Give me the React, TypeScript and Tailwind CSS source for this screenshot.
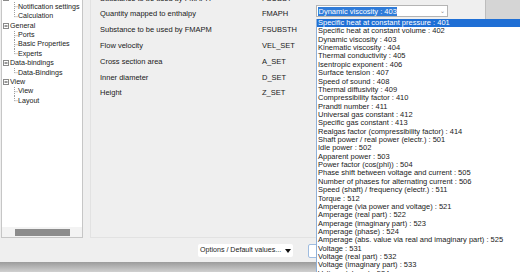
import React from 'react'

const font = { fontFamily: '"Liberation Sans", Arial, sans-serif' }

const tree = [
  { label: '', children: ['Notification settings', 'Calculation'] },
  { label: 'General', children: ['Ports', 'Basic Properties', 'Experts'] },
  { label: 'Data-bindings', children: ['Data-Bindings'] },
  { label: 'View', children: ['View', 'Layout'] },
]

const rows = [
  ['Substance to be used by FMAPH', 'FSUBST'],
  ['Quantity mapped to enthalpy', 'FMAPH'],
  ['Substance to be used by FMAPM', 'FSUBSTH'],
  ['Flow velocity', 'VEL_SET'],
  ['Cross section area', 'A_SET'],
  ['Inner diameter', 'D_SET'],
  ['Height', 'Z_SET'],
]

const options = [
  'Specific heat at constant pressure : 401',
  'Specific heat at constant volume : 402',
  'Dynamic viscosity : 403',
  'Kinematic viscosity : 404',
  'Thermal conductivity : 405',
  'Isentropic exponent : 406',
  'Surface tension : 407',
  'Speed of sound : 408',
  'Thermal diffusivity : 409',
  'Compressibility factor : 410',
  'Prandtl number : 411',
  'Universal gas constant : 412',
  'Specific gas constant : 413',
  'Realgas factor (compressibility factor) : 414',
  'Shaft power / real power (electr.) : 501',
  'Idle power : 502',
  'Apparent power : 503',
  'Power factor (cos(phi)) : 504',
  'Phase shift between voltage and current : 505',
  'Number of phases for alternating current : 506',
  'Speed (shaft) / frequency (electr.) : 511',
  'Torque : 512',
  'Amperage (via power and voltage) : 521',
  'Amperage (real part) : 522',
  'Amperage (imaginary part) : 523',
  'Amperage (phase) : 524',
  'Amperage (abs. value via real and imaginary part) : 525',
  'Voltage : 531',
  'Voltage (real part) : 532',
  'Voltage (imaginary part) : 533',
  'Voltage (phase) : 534',
]

function Connector({ last }: { last: boolean }) {
  return (
    <svg width="4" height="9.4" className="flex-none">
      <line x1="0.5" y1="0" x2="0.5" y2={last ? 4.7 : 9.4} stroke="#a0a0a0" strokeDasharray="1 1" />
      <line x1="0.5" y1="4.7" x2="3.5" y2="4.7" stroke="#a0a0a0" strokeDasharray="1 1" />
    </svg>
  )
}

function Expander() {
  return (
    <svg width="6" height="6" className="flex-none">
      <rect x="0.5" y="0.5" width="5" height="5" fill="#fff" stroke="#8a8a8a" />
      <line x1="1.5" y1="3" x2="4.5" y2="3" stroke="#333" />
    </svg>
  )
}

export default function App() {
  return (
    <div className="w-[520px] h-[272px] overflow-hidden relative flex flex-col bg-[#efefef] text-[7.5px] text-[#1a1a1a] whitespace-nowrap" style={font}>
      <div className="h-[238px] flex">
        {/* tree */}
        <div className="ml-[1px] w-[82px] flex-none bg-white border-l border-r border-b border-[#c6c6c6] flex flex-col overflow-hidden text-[7.1px]">
          <div className="flex-1 mt-[-7px] pl-[1px]">
            {tree.map((g, gi) => (
              <div key={gi}>
                <div className="h-[9.4px] flex items-center gap-[1px]">
                  <Expander />
                  <span>{g.label}</span>
                </div>
                <div className="pl-[11px]">
                  {g.children.map((c, ci) => (
                    <div key={ci} className="h-[9.4px] flex items-center">
                      <Connector last={ci === g.children.length - 1} />
                      <span>{c}</span>
                    </div>
                  ))}
                </div>
              </div>
            ))}
          </div>
          <div className="h-[10px] bg-[#f3f3f3] flex items-center pl-[13px]">
            <div className="w-[55px] h-[7px] bg-[#8c8c8c]" />
          </div>
        </div>

        {/* form */}
        <div className="ml-[7px] flex-1 flex border-l border-b border-[#e2e2e2]">
          <div className="flex-1 pl-[9px] mt-[-9.6px] flex flex-col">
            {rows.map(([label, code], i) => (
              <div key={i} className="h-[15.8px] flex items-center">
                <span className="w-[162px] flex-none">{label}</span>
                <span className="w-[54px] flex-none">{code}</span>
                {i === 1 && (
                  <div className="relative top-[-3px] w-[132px] flex-none h-[12px] bg-white border border-[#b4b4b4] flex items-center pl-[1px] pr-[2px]">
                    <span className="bg-[#2f7bd8] text-white px-[0.5px] leading-[9px]">Dynamic viscosity : 403</span>
                    <span className="ml-auto text-[#8a8a8a] text-[6px]">⌄</span>
                  </div>
                )}
              </div>
            ))}
          </div>
          <div className="w-[35px] flex-none bg-[#d5d5d5] border-l border-[#bdbdbd]" />
        </div>
      </div>

      {/* buttons */}
      <div className="h-[24px] flex items-start pt-[6px] pl-[198px] gap-[15px]">
        <div className="w-[95px] h-[13px] bg-white rounded-[2px] flex items-center pl-[2px] pr-[2px] text-[7.1px]">
          <span>Options / Default values...</span>
          <svg width="6" height="4" className="ml-auto flex-none">
            <polygon points="0,0 6,0 3,4" fill="#111" />
          </svg>
        </div>
        <div className="w-[60px] h-[14px] bg-white border border-[#9fbce0] rounded-[2px]" />
      </div>

      <div className="flex-1 bg-gradient-to-b from-[#9c9c9c] to-[#d0d0d0]" />

      {/* dropdown list */}
      <div className="absolute left-[316px] top-[19px] right-0 h-[270px] bg-white border-l border-[#8fb0d8] overflow-hidden">
        {options.map((o, i) => (
          <div key={i} className={`h-[8.36px] leading-[8.36px] pl-[1px] ${i === 0 ? 'bg-[#1f6fd5] text-white' : ''}`}>
            {o}
          </div>
        ))}
      </div>
    </div>
  )
}
